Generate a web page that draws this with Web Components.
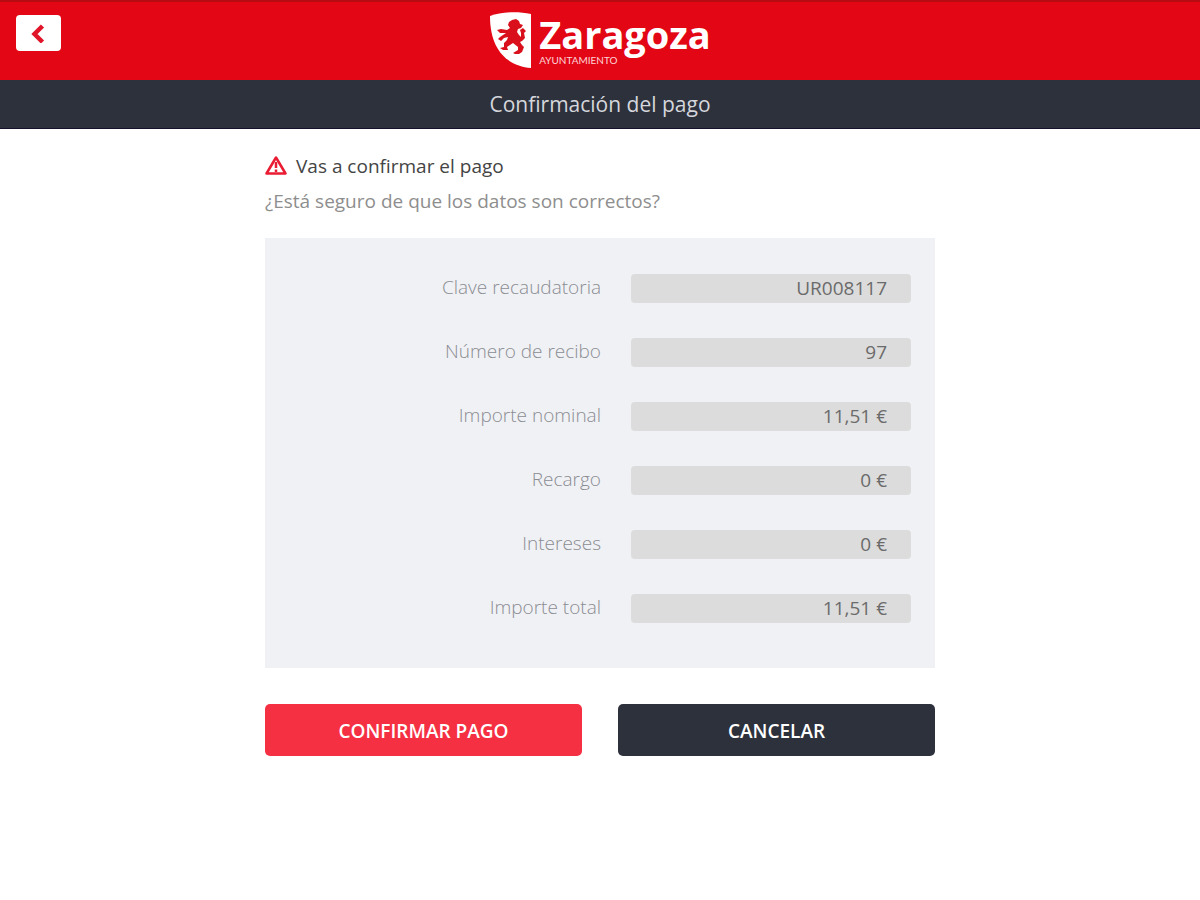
<!DOCTYPE html>
<html lang="es">
<head>
<meta charset="utf-8">
<meta name="viewport" content="width=device-width, initial-scale=1">
<title>Confirmación del pago</title>
<style>
  body { margin: 0; background: #fff; font-family: "Open Sans", "Noto Sans", sans-serif; }
</style>
</head>
<body>
<pago-app></pago-app>
<script>
const define = (name, html, init) => {
  const tpl = document.createElement('template');
  tpl.innerHTML = html;
  customElements.define(name, class extends HTMLElement {
    constructor() {
      super();
      this.attachShadow({ mode: 'open' }).appendChild(tpl.content.cloneNode(true));
    }
    connectedCallback() { if (init) init(this, this.shadowRoot); }
  });
};

define('zaragoza-logo', `
<style>
  :host { display: flex; align-items: center; gap: 8px; color: #fff; }
  svg { display: block; width: 42px; height: 56px; }
  .words { display: grid; }
  .name { font-size: 38px; font-weight: 700; line-height: 40px; }
  .sub { font-family: Lato, sans-serif; font-size: 10px; font-weight: 400; line-height: 12px; color: #fbd5d7; }
</style>
<svg viewBox="0 0 42 56" aria-hidden="true">
  <path fill="#fff" d="M1 4C12 0 28-1 42 2V56C20 54 1 40 1 4Z"/>
  <path fill="#d9101c" d="M23 8 27 7 30 9 31 12 34 13 32 16 29 17 28 20 30 23 32 25 32 21 31 18 34 16 37 19 35 21 36 26 33 29 31 30 33 33 35 35 33 40 30 42 26 42 24 41 29 38 29 35 24 31 21 33 18 35 19 38 14 38 11 36 15 35 15 31 18 28 19 25 15 26 12 29 9 27 11 25 14 23 17 21 11 21 8 18 12 17 18 18 21 16 19 13 20 10Z"/>
</svg>
<div class="words"><span class="name">Zaragoza</span><span class="sub">AYUNTAMIENTO</span></div>
`);

define('app-header', `
<style>
  :host { display: grid; grid-template-columns: 1fr auto 1fr; align-items: start; height: 80px; box-sizing: border-box;
    padding: 12px 16px 0; background: #e30615; box-shadow: inset 0 2px #b80a12; }
  button { width: 45px; height: 36px; margin-top: 3px; padding: 0; display: grid; place-items: center;
    background: #fff; border: 0; border-radius: 4px; cursor: pointer; }
  svg { width: 18px; height: 20px; display: block; }
</style>
<button type="button" aria-label="Volver">
  <svg viewBox="0 0 18 20" aria-hidden="true"><path d="M12.500 3 4.500 11 12.500 19" fill="none" stroke="#e0152a" stroke-width="4.500"/></svg>
</button>
<zaragoza-logo></zaragoza-logo>
`);

define('title-bar', `
<style>
  :host { display: block; background: #2d313c; border-bottom: 1px solid #14122b; color: #d5d7dc; }
  h1 { margin: 0; font-size: 21px; font-weight: 400; line-height: 48px; text-align: center; }
</style>
<h1><slot></slot></h1>
`);

define('confirm-notice', `
<style>
  :host { display: grid; gap: 3px; }
  .head { display: flex; align-items: center; gap: 9px; }
  svg { width: 22px; height: 22px; display: block; }
  h2 { margin: 0; font-size: 19px; font-weight: 400; line-height: 32px; color: #444; }
  p { margin: 0; font-size: 19px; font-weight: 400; line-height: 32px; color: #8e8e8e; }
</style>
<div class="head">
  <svg viewBox="0 0 22 22" aria-hidden="true">
    <path d="M11 2.500 20.500 18.500H1.500Z" fill="none" stroke="#ea1c33" stroke-width="2.500" stroke-linejoin="round"/>
    <path d="M11 7V13M11 14.500V17" stroke="#ea1c33" stroke-width="2.500"/>
  </svg>
  <h2><slot name="heading"></slot></h2>
</div>
<p><slot></slot></p>
`);

define('data-field', `
<style>
  :host { display: grid; grid-template-columns: 1fr 280px; gap: 30px; align-items: start; height: 29px; }
  label { font-size: 19px; font-weight: 300; line-height: 27px; text-align: right; color: #8b8d92; }
  input { box-sizing: border-box; width: 100%; height: 29px; padding: 0 24px 2px; border: 0; border-radius: 4px;
    background: #dcdcdc; color: #6b6b6b; font: 400 19px/27px "Open Sans", "Noto Sans", sans-serif; text-align: right; outline: none; }
</style>
<label for="f"></label><input id="f" type="text" readonly>
`, (el, root) => {
  root.querySelector('label').textContent = el.getAttribute('label');
  root.querySelector('input').value = el.getAttribute('value');
});

define('data-panel', `
<style>
  :host { display: grid; gap: 35px; padding: 36px 24px 45px; background: #f0f1f5; }
</style>
<slot></slot>
`);

define('action-button', `
<style>
  :host { display: block; --fill: #f63043; }
  :host([kind="dark"]) { --fill: #2d313c; }
  button { display: block; width: 100%; height: 52px; padding: 2px 0 0; border: 0; border-radius: 5px; background: var(--fill); color: #fff;
    font: 600 19px/50px "Open Sans", "Noto Sans", sans-serif; cursor: pointer; }
</style>
<button type="button"><slot></slot></button>
`);

define('pago-app', `
<style>
  :host { display: block; }
  main { box-sizing: border-box; max-width: 670px; margin: 0 auto; padding: 21px 0; }
  data-panel { margin-top: 21px; }
  .actions { display: grid; grid-template-columns: 1fr 1fr; gap: 36px; margin-top: 36px; }
</style>
<app-header></app-header>
<title-bar>Confirmación del pago</title-bar>
<main>
  <confirm-notice><span slot="heading">Vas a confirmar el pago</span>¿Está seguro de que los datos son correctos?</confirm-notice>
  <data-panel>
    <data-field label="Clave recaudatoria" value="UR008117"></data-field>
    <data-field label="Número de recibo" value="97"></data-field>
    <data-field label="Importe nominal" value="11,51 €"></data-field>
    <data-field label="Recargo" value="0 €"></data-field>
    <data-field label="Intereses" value="0 €"></data-field>
    <data-field label="Importe total" value="11,51 €"></data-field>
  </data-panel>
  <div class="actions">
    <action-button>CONFIRMAR PAGO</action-button>
    <action-button kind="dark">CANCELAR</action-button>
  </div>
</main>
`);
</script>
</body>
</html>
